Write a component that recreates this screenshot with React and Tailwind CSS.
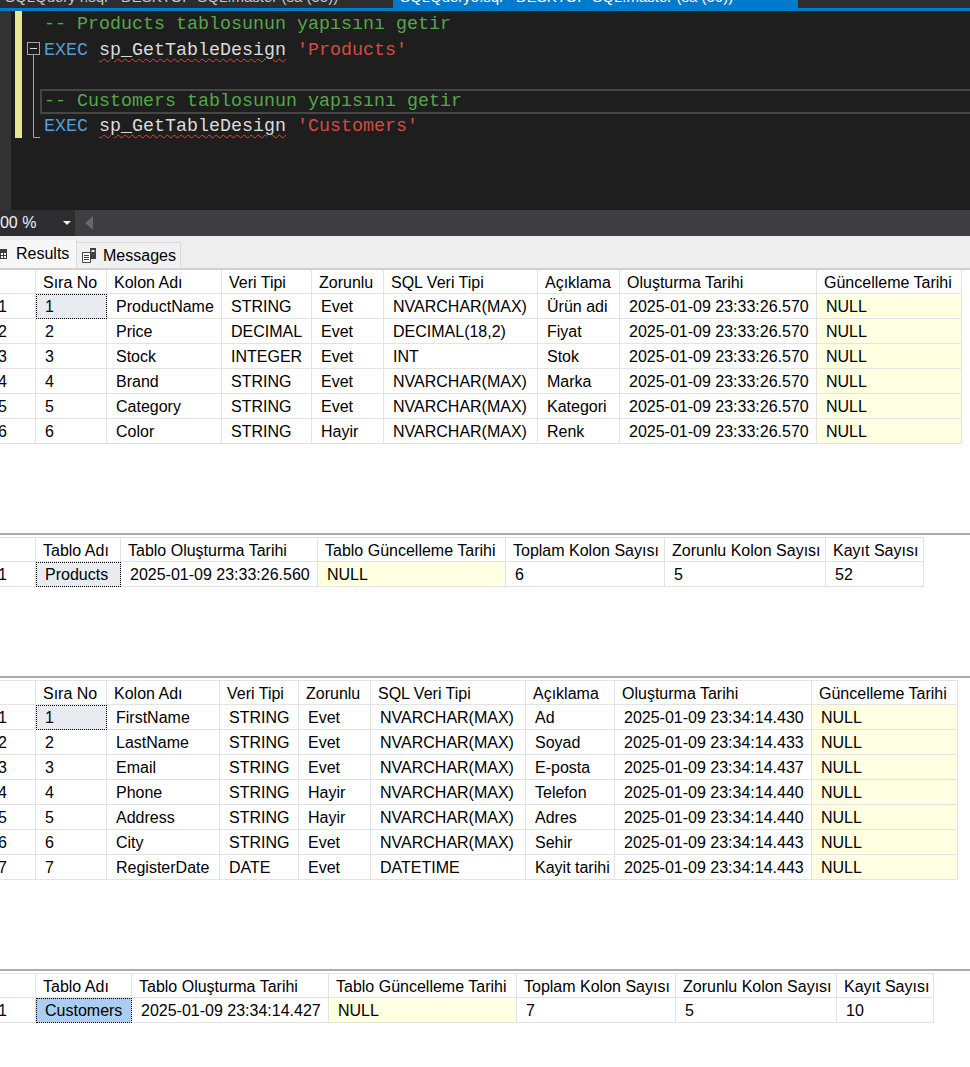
import React from "react";

const ln = "border-[#e3e3e3]";

const grid1 = {
  cols: [
    ["Sıra No", "w-[71px]"],
    ["Kolon Adı", "w-[115px]"],
    ["Veri Tipi", "w-[90px]"],
    ["Zorunlu", "w-[72px]"],
    ["SQL Veri Tipi", "w-[154px]"],
    ["Açıklama", "w-[82px]"],
    ["Oluşturma Tarihi", "w-[197px]"],
    ["Güncelleme Tarihi", "w-[145px]"],
  ],
  rows: [
    ["1", "ProductName", "STRING", "Evet", "NVARCHAR(MAX)", "Ürün adi", "2025-01-09 23:33:26.570", "NULL"],
    ["2", "Price", "DECIMAL", "Evet", "DECIMAL(18,2)", "Fiyat", "2025-01-09 23:33:26.570", "NULL"],
    ["3", "Stock", "INTEGER", "Evet", "INT", "Stok", "2025-01-09 23:33:26.570", "NULL"],
    ["4", "Brand", "STRING", "Evet", "NVARCHAR(MAX)", "Marka", "2025-01-09 23:33:26.570", "NULL"],
    ["5", "Category", "STRING", "Evet", "NVARCHAR(MAX)", "Kategori", "2025-01-09 23:33:26.570", "NULL"],
    ["6", "Color", "STRING", "Hayir", "NVARCHAR(MAX)", "Renk", "2025-01-09 23:33:26.570", "NULL"],
  ],
  nullCol: 7,
  sel: "bg-[#e8ecf1]",
};

const grid2 = {
  cols: [
    ["Tablo Adı", "w-[85px]"],
    ["Tablo Oluşturma Tarihi", "w-[197px]"],
    ["Tablo Güncelleme Tarihi", "w-[188px]"],
    ["Toplam Kolon Sayısı", "w-[159px]"],
    ["Zorunlu Kolon Sayısı", "w-[161px]"],
    ["Kayıt Sayısı", "w-[98px]"],
  ],
  rows: [["Products", "2025-01-09 23:33:26.560", "NULL", "6", "5", "52"]],
  nullCol: 2,
  sel: "bg-[#e8ecf1]",
};

const grid3 = {
  cols: [
    ["Sıra No", "w-[71px]"],
    ["Kolon Adı", "w-[113px]"],
    ["Veri Tipi", "w-[79px]"],
    ["Zorunlu", "w-[72px]"],
    ["SQL Veri Tipi", "w-[155px]"],
    ["Açıklama", "w-[89px]"],
    ["Oluşturma Tarihi", "w-[197px]"],
    ["Güncelleme Tarihi", "w-[146px]"],
  ],
  rows: [
    ["1", "FirstName", "STRING", "Evet", "NVARCHAR(MAX)", "Ad", "2025-01-09 23:34:14.430", "NULL"],
    ["2", "LastName", "STRING", "Evet", "NVARCHAR(MAX)", "Soyad", "2025-01-09 23:34:14.433", "NULL"],
    ["3", "Email", "STRING", "Evet", "NVARCHAR(MAX)", "E-posta", "2025-01-09 23:34:14.437", "NULL"],
    ["4", "Phone", "STRING", "Hayir", "NVARCHAR(MAX)", "Telefon", "2025-01-09 23:34:14.440", "NULL"],
    ["5", "Address", "STRING", "Hayir", "NVARCHAR(MAX)", "Adres", "2025-01-09 23:34:14.440", "NULL"],
    ["6", "City", "STRING", "Evet", "NVARCHAR(MAX)", "Sehir", "2025-01-09 23:34:14.443", "NULL"],
    ["7", "RegisterDate", "DATE", "Evet", "DATETIME", "Kayit tarihi", "2025-01-09 23:34:14.443", "NULL"],
  ],
  nullCol: 7,
  sel: "bg-[#e8ecf1]",
};

const grid4 = {
  cols: [
    ["Tablo Adı", "w-[96px]"],
    ["Tablo Oluşturma Tarihi", "w-[197px]"],
    ["Tablo Güncelleme Tarihi", "w-[188px]"],
    ["Toplam Kolon Sayısı", "w-[159px]"],
    ["Zorunlu Kolon Sayısı", "w-[161px]"],
    ["Kayıt Sayısı", "w-[97px]"],
  ],
  rows: [["Customers", "2025-01-09 23:34:14.427", "NULL", "7", "5", "10"]],
  nullCol: 2,
  sel: "bg-[#aacdf1]",
};

function Grid({ g, headTop }) {
  return (
    <div className="flex flex-col w-max">
      <div className={`flex ${headTop ? "h-[25px] border-t" : "h-[24px]"} ${ln}`}>
        <div className={`w-[36px] shrink-0 border-r border-b ${ln}`} />
        {g.cols.map(([name, w]) => (
          <div key={name} className={`${w} shrink-0 flex items-center pt-[2px] pl-[7px] border-r border-b ${ln} whitespace-nowrap overflow-hidden`}>
            {name}
          </div>
        ))}
      </div>
      {g.rows.map((r, i) => (
        <div key={i} className="flex h-[25px]">
          <div className={`w-[36px] shrink-0 flex items-center pt-[2px] border-r border-b ${ln}`}>
            <span className="-ml-[2px]">{i + 1}</span>
          </div>
          {r.map((v, j) => {
            const selected = i === 0 && j === 0;
            return (
              <div
                key={j}
                className={`${g.cols[j][1]} shrink-0 flex items-center pt-[2px] pl-[9px] border-r border-b ${ln} whitespace-nowrap overflow-hidden ${
                  j === g.nullCol ? "bg-[#ffffe1]" : ""
                } ${selected ? `${g.sel} outline-1 outline-dotted outline-black -outline-offset-1` : ""}`}
              >
                {v}
              </div>
            );
          })}
        </div>
      ))}
    </div>
  );
}

const cm = "text-[#57a64a]";
const kw = "text-[#569cd6]";
const str = "text-[#d64b40]";
const idf = "text-[#dcdcdc] underline decoration-wavy decoration-1 decoration-[#f0403a] underline-offset-[3px]";

export default function App() {
  return (
    <div className="w-[970px] h-[1067px] overflow-hidden bg-white flex flex-col font-['Liberation_Sans',Arial,sans-serif] text-[16px] text-black">
      {/* document tabs, scrolled so only the bottom of their captions shows */}
      <div className="flex h-[8px] shrink-0 bg-[#2d2d30] overflow-hidden text-[15px] leading-[15px]">
        <div className="w-[393px] pl-[5px] text-[#c8c8c8] whitespace-nowrap">
          <div className="-mt-[11px]">SQLQuery4.sql - DESKTOP-SQL.master (sa (55))</div>
        </div>
        <div className="w-[405px] bg-[#007acc] pl-[7px] text-white whitespace-nowrap">
          <div className="-mt-[11px]">SQLQuery5.sql - DESKTOP-SQL.master (sa (56))</div>
        </div>
      </div>
      <div className="h-[3px] shrink-0 bg-[#007acc]" />

      {/* editor */}
      <div className="flex h-[199px] shrink-0 bg-[#1e1e1e]">
        <div className="w-[11px] bg-[#333333]" />
        <div className="w-[4px]" />
        <div className="w-[7px]">
          <div className="h-[127px] bg-[#e6e68c]" />
        </div>
        <svg width="18" height="199" viewBox="0 0 18 199" className="shrink-0">
          <rect x="5.5" y="31.5" width="12" height="12" fill="none" stroke="#a5a5a5" />
          <path d="M8 37.5h7" stroke="#d4d4d4" />
          <path d="M11.5 44v82.5H18" fill="none" stroke="#a5a5a5" />
        </svg>
        <div className="flex-1 pl-[4px] pt-[1px] font-['Liberation_Mono',monospace] text-[18.33px] whitespace-pre">
          <div className="h-[25.5px] leading-[25.5px]">
            <span className={cm}>-- Products tablosunun yapısını getir</span>
          </div>
          <div className="h-[25.5px] leading-[25.5px]">
            <span className={kw}>EXEC</span> <span className={idf}>sp_GetTableDesign</span>{" "}
            <span className={str}>'Products'</span>
          </div>
          <div className="h-[25.5px] leading-[25.5px]" />
          <div className="h-[25.5px] leading-[21.5px] -ml-[4px] pl-[2px] border-l-2 border-y-2 border-[#464646]">
            <span className={cm}>-- Customers tablosunun yapısını getir</span>
          </div>
          <div className="h-[25.5px] leading-[25.5px]">
            <span className={kw}>EXEC</span> <span className={idf}>sp_GetTableDesign</span>{" "}
            <span className={str}>'Customers'</span>
          </div>
        </div>
      </div>

      {/* zoom bar */}
      <div className="flex items-center h-[26px] shrink-0 bg-[#3e3e42]">
        <div className="w-[75px] h-full bg-[#2d2d30] flex items-center text-[#f1f1f1] whitespace-nowrap">
          <span className="-ml-[9px]">100 %</span>
          <svg width="8" height="5" viewBox="0 0 8 5" className="ml-auto mr-[4px]">
            <path d="M0 0h8L4 4z" fill="#f1f1f1" />
          </svg>
        </div>
        <svg width="8" height="14" viewBox="0 0 8 14" className="ml-[10px]">
          <path d="M8 0v14L0 7z" fill="#686868" />
        </svg>
      </div>

      {/* result tabs */}
      <div className="flex items-end h-[34px] shrink-0 bg-[#eeeeee] border-b-2 border-[#cfcfcf]">
        <div className="w-[77px] h-[28px] flex items-center bg-[#f7f7f7] border-r border-[#dadada]">
          <svg width="11" height="11" viewBox="0 0 11 11" className="-ml-[3px] mr-[8px] shrink-0">
            <rect x="0" y="0" width="10" height="10" fill="#3c3c3c" />
            <rect x="1" y="4" width="2" height="2" fill="#fff" />
            <rect x="4" y="4" width="2" height="2" fill="#fff" />
            <rect x="7" y="4" width="2" height="2" fill="#fff" />
            <rect x="1" y="7" width="2" height="2" fill="#fff" />
            <rect x="4" y="7" width="2" height="2" fill="#fff" />
            <rect x="7" y="7" width="2" height="2" fill="#fff" />
          </svg>
          <span>Results</span>
        </div>
        <div className="w-[104px] h-[26px] flex items-center bg-[#f1f1f1] border-t border-r border-[#dadada]">
          <svg width="14" height="15" viewBox="0 0 14 15" className="ml-[5px] mr-[7px] shrink-0">
            <path d="M0.5 4.5h8v10h-8z" fill="#fff" stroke="#424242" />
            <path d="M2 7.5h5M2 9.5h5M2 11.5h5" stroke="#424242" />
            <rect x="8" y="0" width="6" height="11" fill="#424242" />
            <rect x="9.5" y="2" width="3" height="2" fill="#e8e8e8" />
          </svg>
          <span>Messages</span>
        </div>
      </div>

      {/* result panes */}
      <div className="h-[263px] shrink-0">
        <Grid g={grid1} />
      </div>
      <div className="h-[143px] shrink-0 border-t-2 border-[#ababab] pt-[2px]">
        <Grid g={grid2} headTop />
      </div>
      <div className="h-[293px] shrink-0 border-t-2 border-[#ababab] pt-[2px]">
        <Grid g={grid3} headTop />
      </div>
      <div className="flex-1 border-t-2 border-[#ababab] pt-[2px]">
        <Grid g={grid4} headTop />
      </div>
    </div>
  );
}
